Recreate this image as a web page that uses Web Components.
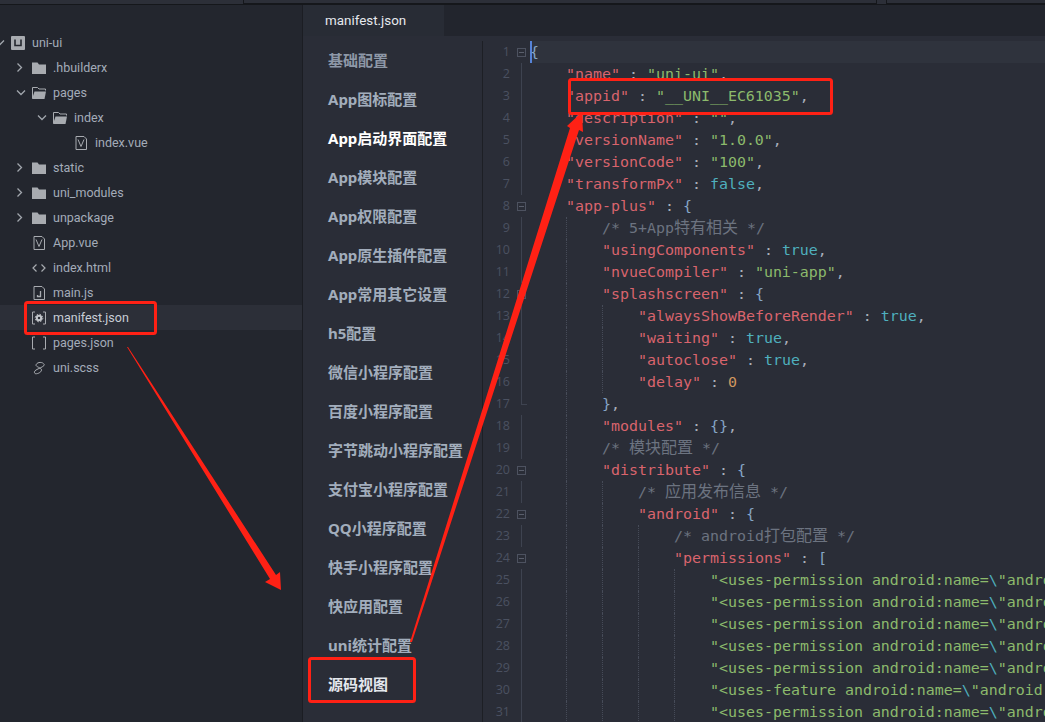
<!DOCTYPE html>
<html lang="zh">
<head>
<meta charset="utf-8">
<title>manifest.json</title>
<style>
  html, body { margin: 0; height: 722px; overflow: hidden; background: #23262e; }
</style>
</head>
<body>
<ide-window></ide-window>
<script>
(() => {
  const UI_FONT = 'Roboto, "Noto Sans CJK SC", sans-serif';
  const MONO_FONT = '"DejaVu Sans Mono", "Noto Sans CJK SC", monospace';

  const ICONS = {
    project: '<svg viewBox="0 0 14 14"><rect width="14" height="14" rx="1" fill="#a8abb0"/><path d="M4 3.500v6h6v-6" fill="none" stroke="#24272e" stroke-width="1.600"/></svg>',
    folder: '<svg viewBox="0 0 14 14"><path d="M0 1.500h5.500l1.500 2h7v9.500H0z" fill="#a8abb0"/></svg>',
    open: '<svg viewBox="0 0 14 14"><path d="M.5 12V1.500h5l1.500 1.500h6.500v1.500" fill="none" stroke="#a8abb0"/><path d="M2.500 5.500H14L12.500 13H0z" fill="#a8abb0"/></svg>',
    vue: '<svg viewBox="0 0 14 14"><path d="M2 .5h8l2.500 2.500v10.500H2z" fill="none" stroke="#a8abb0"/><path d="M4 3.500l3 7 3-7" fill="none" stroke="#a8abb0"/></svg>',
    js: '<svg viewBox="0 0 14 14"><path d="M2 .5h8l2.500 2.500v10.500H2z" fill="none" stroke="#a8abb0"/><path d="M8.500 5v5.500H5.500V9" fill="none" stroke="#a8abb0" stroke-width="1.300"/></svg>',
    html: '<svg viewBox="0 0 14 14"><path d="M4.500 3.500L1 7l3.500 3.500M9.500 3.500L13 7l-3.500 3.500" fill="none" stroke="#a8abb0" stroke-width="1.200"/></svg>',
    config: '<svg viewBox="0 0 14 14"><path d="M3 1H.5v12H3M11 1h2.500v12H11" fill="none" stroke="#a8abb0"/><circle cx="7" cy="7" r="2.200" fill="none" stroke="#c4c7cc" stroke-width="2"/><circle cx="7" cy="7" r="3.800" fill="none" stroke="#c4c7cc" stroke-dasharray="1.500 1.500"/></svg>',
    brackets: '<svg viewBox="0 0 14 14"><path d="M3 1H.5v12H3M11 1h2.500v12H11" fill="none" stroke="#a8abb0"/></svg>',
    scss: '<svg viewBox="0 0 14 14"><path d="M11.500 2.500C9 .5 4.500 1.500 4 4c-.4 2 5.500 2.500 5.500 5 0 2.500-5 4.500-6.500 3.500-1-.7-.8-2.500 1-3.500 2.500-1.500 6-2.500 8-4.500 1-1-.2-1.500-.5-1.500" fill="none" stroke="#a8abb0"/></svg>',
  };

  class TreeRow extends HTMLElement {
    connectedCallback() {
      if (this.shadowRoot) return;
      const level = Number(this.getAttribute("level") || 0);
      const arrow = this.getAttribute("arrow");
      const icon = this.getAttribute("icon");
      const chevron = arrow === "open"
        ? '<path d="M1 3.500l4 4 4-4"/>'
        : arrow === "closed" ? '<path d="M1.500 1.500l4 4-4 4"/>' : "";
      const root = this.attachShadow({ mode: "open" });
      root.innerHTML = `
        <style>
          :host { display: flex; align-items: center; height: 25px; color: #a3acb9; }
          :host([selected]) { background: #2c2f38; color: #c8ced6; }
          .arrow { flex: 0 0 16px; height: 11px; margin-left: ${level * 21 - 5}px; }
          .arrow svg { display: block; width: 11px; height: 11px; fill: none; stroke: #a1a6ad; stroke-width: 1.300; }
          .icon { flex: 0 0 21px; height: 14px; }
          .icon svg { display: block; width: 14px; height: 14px; }
        </style>
        <span class="arrow"><svg viewBox="0 0 11 11">${chevron}</svg></span>
        <span class="icon">${ICONS[icon]}</span>
        <span><slot></slot></span>`;
    }
  }

  class FileTree extends HTMLElement {
    connectedCallback() {
      if (this.shadowRoot) return;
      const rows = [
        ["uni-ui", 0, "open", "project"],
        [".hbuilderx", 1, "closed", "folder"],
        ["pages", 1, "open", "open"],
        ["index", 2, "open", "open"],
        ["index.vue", 3, "", "vue"],
        ["static", 1, "closed", "folder"],
        ["uni_modules", 1, "closed", "folder"],
        ["unpackage", 1, "closed", "folder"],
        ["App.vue", 1, "", "vue"],
        ["index.html", 1, "", "html"],
        ["main.js", 1, "", "js"],
        ["manifest.json", 1, "", "config", true],
        ["pages.json", 1, "", "brackets"],
        ["uni.scss", 1, "", "scss"],
      ];
      const root = this.attachShadow({ mode: "open" });
      root.innerHTML = `
        <style>
          :host { display: block; flex: 0 0 303px; box-sizing: border-box; padding-top: 25px;
                  background: #23262e; border-right: 1px solid #1b1d23;
                  font: 12.500px ${UI_FONT}; }
        </style>
        ${rows.map(([name, level, arrow, icon, sel]) =>
          `<tree-row level="${level}" arrow="${arrow}" icon="${icon}" ${sel ? "selected" : ""}>${name}</tree-row>`
        ).join("")}`;
    }
  }

  class MenuItem extends HTMLElement {
    connectedCallback() {
      if (this.shadowRoot) return;
      this.attachShadow({ mode: "open" }).innerHTML = `
        <style>
          :host { display: flex; align-items: center; box-sizing: border-box; height: 39px;
                  padding: 0 0 2px 25px; color: #a2adbc; }
          :host([dim]) { color: #8e98a7; }
          :host([active]) { color: #ffffff; }
          :host([strong]) { color: #e4e8ee; }
        </style>
        <slot></slot>`;
    }
  }

  class ConfigMenu extends HTMLElement {
    connectedCallback() {
      if (this.shadowRoot) return;
      const items = ["基础配置", "App图标配置", "App启动界面配置", "App模块配置", "App权限配置", "App原生插件配置",
        "App常用其它设置", "h5配置", "微信小程序配置", "百度小程序配置", "字节跳动小程序配置", "支付宝小程序配置",
        "QQ小程序配置", "快手小程序配置", "快应用配置", "uni统计配置", "源码视图"];
      const attr = { 0: "dim", 2: "active", 16: "strong" };
      this.attachShadow({ mode: "open" }).innerHTML = `
        <style>
          :host { display: block; flex: 0 0 179px; height: 681px; border-right: 1px solid #1d1f25;
                  font: bold 15px "Noto Sans", "Noto Sans CJK SC", sans-serif; }
        </style>
        ${items.map((t, i) => `<menu-item ${attr[i] || ""}>${t}</menu-item>`).join("")}`;
    }
  }

  class CodeLine extends HTMLElement {
    connectedCallback() {
      if (this.shadowRoot) return;
      const n = this.getAttribute("n");
      const indent = Number(this.getAttribute("indent") || 0);
      const fold = this.getAttribute("fold") || "";
      const cells = Array.from({ length: indent }, (_, i) => `<i class="${i ? "guide" : ""}"></i>`).join("");
      this.attachShadow({ mode: "open" }).innerHTML = `
        <style>
          :host { display: flex; height: 22px; line-height: 22px; white-space: pre; }
          .num { flex: 0 0 27px; text-align: right; color: #4b5161;
                 font: 12.500px/22px "Open Sans", sans-serif; }
          .fold { flex: 0 0 20px; display: flex; align-items: center; padding-left: 7px; box-sizing: border-box; }
          .fold-line { background: linear-gradient(#3e4350, #3e4350) no-repeat 11px 0 / 1px 100%; }
          .fold-end { background: linear-gradient(#3e4350, #3e4350) no-repeat 11px 0 / 1px 11px,
                                  linear-gradient(#3e4350, #3e4350) no-repeat 11px 11px / 6px 1px; }
          .box { width: 7px; height: 7px; border: 1px solid #4d5260;
                 background: linear-gradient(#5a5f6c, #5a5f6c) no-repeat center / 5px 1px; }
          .code { flex: 1; min-width: 0; overflow: hidden; }
          :host([current]) .code { background: #2f333d; box-shadow: inset 2px 0 #5683d8; }
          i { display: inline-block; width: 36px; height: 22px; vertical-align: top; box-sizing: border-box; }
          i.guide { border-left: 1px dotted #464b58; }
        </style>
        <span class="num">${n}</span>
        <span class="fold fold-${fold}">${fold === "box" ? '<span class="box"></span>' : ""}</span>
        <span class="code">${cells}<slot></slot></span>`;
    }
  }

  class CodeView extends HTMLElement {
    connectedCallback() {
      if (this.shadowRoot) return;
      const k = (t) => `<span class="k">"${t}"</span>`;
      const s = (t) => `<span class="s">"${t}"</span>`;
      const lit = (t) => `<span class="l">${t}</span>`;
      const num = (t) => `<span class="d">${t}</span>`;
      const b = (t) => `<span class="b">${t}</span>`;
      const c = (t) => `<span class="c">${t.replace(/[\u4e00-\u9fff]+/g, (m) => `<span class="cjk">${m}</span>`)}</span>`;
      const perm = `<span class="s">"&lt;uses-permission android:name=</span><span class="l">\\</span><span class="s">"andro</span>`;
      const feat = `<span class="s">"&lt;uses-feature android:name=</span><span class="l">\\</span><span class="s">"android</span>`;
      const lines = [
        ["box", 0, b("{")],
        ["line", 1, `${k("name")} : ${s("uni-ui")},`],
        ["line", 1, `${k("appid")} : ${s("__UNI__EC61035")},`],
        ["line", 1, `${k("description")} : ${s("")},`],
        ["line", 1, `${k("versionName")} : ${s("1.0.0")},`],
        ["line", 1, `${k("versionCode")} : ${s("100")},`],
        ["line", 1, `${k("transformPx")} : ${lit("false")},`],
        ["box", 1, `${k("app-plus")} : ${b("{")}`],
        ["line", 2, c("/* 5+App特有相关 */")],
        ["line", 2, `${k("usingComponents")} : ${lit("true")},`],
        ["line", 2, `${k("nvueCompiler")} : ${s("uni-app")},`],
        ["box", 2, `${k("splashscreen")} : ${b("{")}`],
        ["line", 3, `${k("alwaysShowBeforeRender")} : ${lit("true")},`],
        ["line", 3, `${k("waiting")} : ${lit("true")},`],
        ["line", 3, `${k("autoclose")} : ${lit("true")},`],
        ["line", 3, `${k("delay")} : ${num("0")}`],
        ["end", 2, `${b("}")},`],
        ["line", 2, `${k("modules")} : ${b("{}")},`],
        ["line", 2, c("/* 模块配置 */")],
        ["box", 2, `${k("distribute")} : ${b("{")}`],
        ["line", 3, c("/* 应用发布信息 */")],
        ["box", 3, `${k("android")} : ${b("{")}`],
        ["line", 4, c("/* android打包配置 */")],
        ["box", 4, `${k("permissions")} : ${b("[")}`],
        ["line", 5, perm], ["line", 5, perm], ["line", 5, perm], ["line", 5, perm], ["line", 5, perm],
        ["line", 5, feat],
        ["line", 5, perm],
      ];
      this.attachShadow({ mode: "open" }).innerHTML = `
        <style>
          :host { display: block; flex: 1; min-width: 0; height: 681px; overflow: hidden;
                  font: 14.950px ${MONO_FONT}; color: #a8afba; }
          .k { color: #d9646d; }
          .s { color: #8cba6c; }
          .l { color: #4fb0be; }
          .d { color: #d0975f; }
          .b { color: #86a5c6; }
          .c { color: #6c7380; }
          .cjk { font-size: 16px; }
        </style>
        ${lines.map(([fold, indent, html], i) =>
          `<code-line n="${i + 1}" fold="${fold}" indent="${indent}" ${i ? "" : "current"}>${html}</code-line>`
        ).join("")}`;
    }
  }

  class EditorTab extends HTMLElement {
    connectedCallback() {
      if (this.shadowRoot) return;
      this.attachShadow({ mode: "open" }).innerHTML = `
        <style>
          :host { display: flex; align-items: center; box-sizing: border-box; width: 141px; height: 31px;
                  padding-left: 22px; background: #282c35; color: #e6e9ee; font: 13.400px ${UI_FONT}; }
        </style>
        <slot></slot>`;
    }
  }

  // red markers pasted on top of the screenshot
  class AnnotationLayer extends HTMLElement {
    connectedCallback() {
      if (this.shadowRoot) return;
      this.attachShadow({ mode: "open" }).innerHTML = `
        <style>
          :host { position: absolute; inset: 0; pointer-events: none; }
          svg { display: block; width: 100%; height: 100%; }
          rect { fill: none; stroke: #ff2115; stroke-width: 3; }
          polygon { fill: #ff2115; }
        </style>
        <svg viewBox="0 0 1045 722">
          <rect x="25.500" y="302.500" width="130" height="31" rx="2"/>
          <rect x="309.500" y="658.500" width="105" height="43" rx="2"/>
          <rect x="569.500" y="79.500" width="262" height="34" rx="2"/>
          <polygon points="127,347 128,347 276,575 280,572 281,590 265,582 270,579"/>
          <polygon points="410,642 570,128 567,126 582,112 583,132 579,130 412,642"/>
        </svg>`;
    }
  }

  class IdeWindow extends HTMLElement {
    connectedCallback() {
      if (this.shadowRoot) return;
      this.attachShadow({ mode: "open" }).innerHTML = `
        <style>
          :host { display: flex; flex-direction: column; position: relative; width: 1045px; height: 722px; overflow: hidden; }
          .top { flex: 0 0 5px; box-sizing: border-box; display: flex; gap: 9px; padding-left: 243px;
                 background: #2c2f38; border-bottom: 1px solid #15171b; }
          .top b { flex: 0 0 632px; border: 1px solid #15171b; border-top: 0; }
          .top b + b { flex: 1; border-right: 0; }
          .main { flex: 1; display: flex; min-height: 0; }
          .right { flex: 1; min-width: 0; display: flex; flex-direction: column; background: #2a2d37; }
          .tabs { flex: 0 0 31px; display: flex; background: #22252d; }
          .body { flex: 1; min-height: 0; display: flex; padding-top: 5px; }
        </style>
        <div class="top"><b></b><b></b></div>
        <div class="main">
          <file-tree></file-tree>
          <div class="right">
            <div class="tabs"><editor-tab>manifest.json</editor-tab></div>
            <div class="body">
              <config-menu></config-menu>
              <code-view></code-view>
            </div>
          </div>
        </div>
        <annotation-layer></annotation-layer>`;
    }
  }

  customElements.define("tree-row", TreeRow);
  customElements.define("file-tree", FileTree);
  customElements.define("menu-item", MenuItem);
  customElements.define("config-menu", ConfigMenu);
  customElements.define("code-line", CodeLine);
  customElements.define("code-view", CodeView);
  customElements.define("editor-tab", EditorTab);
  customElements.define("annotation-layer", AnnotationLayer);
  customElements.define("ide-window", IdeWindow);
})();
</script>
</body>
</html>
